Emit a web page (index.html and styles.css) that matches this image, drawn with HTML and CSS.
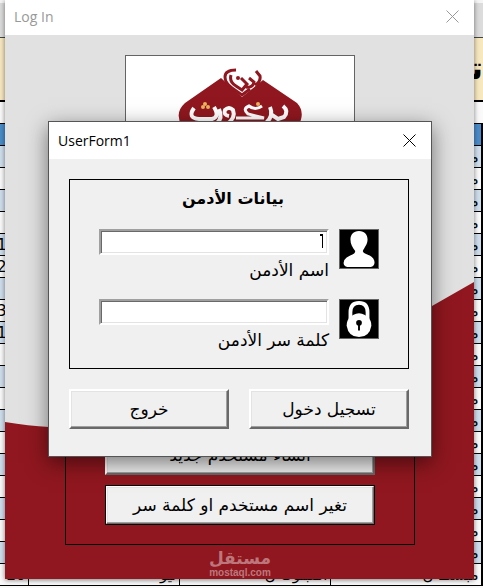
FILE: index.html
```
<!DOCTYPE html>
<html lang="ar">
<head>
  <meta charset="UTF-8" />
  <title>Log In</title>
  <link rel="stylesheet" href="styles.css">
</head>
<body>

  <!-- Spreadsheet behind the windows -->
  <div class="sheet">
    <div class="sheet-ribbon"></div>
    <div class="sheet-title">تقر</div>
    <div class="sheet-gap"></div>
    <table class="sheet-table">
      <colgroup>
        <col class="col-first"><col class="col"><col class="col"><col class="col"><col>
      </colgroup>
      <tbody id="sheetRows"></tbody>
    </table>
  </div>

  <!-- Log In window -->
  <div class="window login">
    <div class="titlebar">
      <span>Log In</span>
      <button class="close" type="button" aria-label="Close">
        <svg width="13" height="13" viewBox="0 0 13 13"><path d="M.5 .5l12 12M12.5 .5l-12 12" /></svg>
      </button>
    </div>
    <div class="login-body">
      <svg class="login-bg" viewBox="0 0 469 544" preserveAspectRatio="none">
        <path d="M0 387Q24 391 44 392Q250 400 427 271L469 247V544H0Z" fill="#90171f" />
      </svg>
      <div class="logo">
        <svg width="228" height="218" viewBox="126 56 228 218">
          <path d="M221 78L185 103Q174 113 182 126L240 172L298 126Q306 113 297 103L263 80L242 97Z" fill="#90171f" />
          <path d="M236 70Q225 70 225 77Q225 83 232 88L242 95L250 89" fill="none" stroke="#90171f" stroke-width="3" />
          <path d="M231 75Q229 82 236 86L242 90L247 84L241 78M246 87Q253 88 254 82L249 78M256 71L260 76Q261 82 255 85" fill="none" stroke="#90171f" stroke-width="3" />
          <circle cx="238" cy="78" r="2" fill="#90171f" />
          <g fill="none" stroke="#fff" stroke-width="4">
            <path d="M194 108Q187 118 199 119H212Q220 117 214 107M219 109Q223 118 217 123" />
            <path d="M229 116Q223 115 225 110Q229 106 233 110Q236 118 227 124" />
            <path d="M262 106Q255 111 249 106Q242 109 248 114L264 118H236" stroke-width="3" />
            <path d="M270 107Q274 116 266 123M283 106Q289 111 284 117L278 119L272 115" />
          </g>
          <g fill="#edb25c">
            <circle cx="203" cy="107" r="2" /><circle cx="208" cy="107" r="2" /><circle cx="205" cy="104" r="2" /><circle cx="258" cy="104" r="2" />
          </g>
        </svg>
      </div>
      <div class="login-frame">
        <button class="btn" type="button">انشاء مستخدم جديد</button>
        <button class="btn btn-default" type="button">تغير اسم مستخدم او كلمة سر</button>
      </div>
      <div class="watermark">
        <div class="watermark-name">مستقل</div>
        <div class="watermark-url">mostaql.com</div>
      </div>
    </div>
  </div>

  <!-- Admin form -->
  <div class="window dialog">
    <div class="titlebar">
      <span>UserForm1</span>
      <button class="close" type="button" aria-label="Close">
        <svg width="13" height="13" viewBox="0 0 13 13"><path d="M.5 .5l12 12M12.5 .5l-12 12" /></svg>
      </button>
    </div>
    <form class="dialog-body">
      <div class="frame">
        <h2>بيانات الأدمن</h2>
        <div class="field">
          <div class="field-main">
            <input type="text" id="adminName" dir="rtl">
            <svg class="caret" width="3" height="14" viewBox="0 0 3 14"><path d="M0 0h3v14h-1V2H0Z" /></svg>
            <label for="adminName">اسم الأدمن</label>
          </div>
          <svg class="icon" viewBox="0 0 40 40">
            <path d="M20 1C26 1 29 5 29 10C29 15 26 18 24 22C25 26 31 25 35 30Q37 33 36 36Q35 39 30 39H10Q5 39 4 36Q3 32 7 29C11 26 16 26 16 22C13 18 11 15 11 10C11 5 14 1 20 1Z" fill="#fff" />
          </svg>
        </div>
        <div class="field">
          <div class="field-main">
            <input type="password" id="adminPass" dir="rtl">
            <label for="adminPass">كلمة سر الأدمن</label>
          </div>
          <svg class="icon" viewBox="0 0 40 40">
            <path d="M11 20V13Q11 3 20 3Q29 3 29 13V20" fill="none" stroke="#fff" stroke-width="4" />
            <path d="M20 14Q33 16 33 27Q31 39 20 39Q9 39 7 27Q7 16 20 14Z" fill="#fff" />
            <circle cx="20" cy="24" r="3" />
            <path d="M19 24h2v8h-2z" />
          </svg>
        </div>
      </div>
      <div class="actions">
        <button class="btn" type="button">خروج</button>
        <button class="btn" type="button">تسجيل دخول</button>
      </div>
    </form>
  </div>

  <script>
    const rows = document.getElementById("sheetRows");
    const numbers = { 5: "1", 6: "2", 8: "3", 9: "1" };

    for (let i = 0; i < 21; i++) {
      const row = document.createElement("tr");
      if (i === 0) {
        row.className = "head";
        row.innerHTML = "<td></td><td></td><td></td><td></td><td></td>";
      } else if (i === 20) {
        row.innerHTML = `<td>20</td><td>تيو</td><td>المبلوك ن</td><td>مبسط ن</td><td></td>`;
      } else {
        row.innerHTML = `<td class="num">${numbers[i] || ""}</td><td></td><td></td><td>م</td><td></td>`;
      }
      rows.appendChild(row);
    }
  </script>
</body>
</html>
```
FILE: styles.css
```
* {
  box-sizing: border-box;
}

body {
  margin: 0;
  min-height: 100vh;
  position: relative;
  overflow: hidden;
  background: #fafafa;
  font-family: "DejaVu Sans", Tahoma, sans-serif;
  font-size: 17px;
  color: #000;
}

/* spreadsheet */
.sheet-ribbon {
  height: 38px;
  background: #dcdcdc;
  border-top: 3px solid #f5f5f5;
  border-bottom: 1px solid #444;
}

.sheet-title {
  height: 64px;
  background: #f8e8c0;
  border-bottom: 2px solid #000;
  font-size: 32px;
  font-weight: bold;
  line-height: 60px;
  text-align: right;
  overflow: hidden;
}

.sheet-gap {
  height: 21px;
}

.sheet-table {
  width: 100%;
  table-layout: fixed;
  border-collapse: collapse;
  font-size: 15px;
  line-height: 20px;
}

.col-first {
  width: 28px;
}

.col {
  width: 151px;
}

.sheet-table td {
  height: 22px;
  padding: 0 2px;
  border: 1px solid #000;
  text-align: right;
  white-space: nowrap;
  overflow: hidden;
}

.sheet-table td:first-child {
  border-left: 0;
}

.sheet-table td.num {
  text-align: left;
  padding: 0;
  text-indent: -3px;
}

.sheet-table tr:nth-child(even) {
  background: #cfdeec;
}

.sheet-table .head {
  background: #4a8bc9;
}

/* windows */
.window {
  position: absolute;
}

.titlebar {
  display: flex;
  align-items: center;
  justify-content: space-between;
  background: #fff;
  font-family: "Open Sans", "Segoe UI", sans-serif;
  font-size: 14px;
}

.close {
  display: flex;
  padding: 0;
  border: 0;
  background: none;
}

.close path {
  fill: none;
  stroke: #000;
}

.login {
  top: 0;
  left: 5px;
  right: 9px;
  box-shadow: 0 1px 5px rgba(0, 0, 0, 0.5);
}

.login .titlebar {
  height: 35px;
  padding: 0 15px 2px 9px;
  color: #999;
}

.login .close path {
  stroke: #999;
}

.login-body {
  position: relative;
  padding: 20px 59px 0 60px;
  background: #e1e1e1;
}

.login-bg {
  position: absolute;
  top: 0;
  left: 0;
  width: 100%;
  height: 100%;
}

.logo {
  position: relative;
  width: 230px;
  height: 220px;
  margin: 0 auto 100px;
  background: #fff;
  border: 1px solid #646464;
}

.login-frame {
  position: relative;
  display: flex;
  flex-direction: column;
  gap: 10px;
  padding: 59px 39px 19px;
  border: 1px solid #000;
}

.watermark {
  position: relative;
  height: 34px;
  padding-top: 4px;
  text-align: center;
  color: #bd777c;
  font-weight: bold;
}

.watermark-name {
  font-size: 17px;
  line-height: 18px;
}

.watermark-url {
  font-family: "Liberation Sans", Arial, sans-serif;
  font-size: 10px;
  line-height: 12px;
}

.btn {
  flex: 1 1 auto;
  height: 40px;
  min-height: 40px;
  padding: 0;
  background: #f0f0f0;
  border: 2px solid;
  border-color: #fff #696969 #696969 #fff;
  box-shadow: inset -1px -1px #a0a0a0, inset 1px 1px #e3e3e3;
  font-family: inherit;
  font-size: 17px;
  color: #000;
}

.btn-default {
  outline: 1px solid #000;
  outline-offset: -1px;
}

.dialog {
  top: 121px;
  left: 48px;
  right: 51px;
  background: #f0f0f0;
  border: 1px solid #555;
  box-shadow: 0 6px 20px rgba(0, 0, 0, 0.5);
}

.dialog .titlebar {
  height: 37px;
  padding: 0 15px 0 9px;
}

.dialog-body {
  padding: 20px 22px 27px 20px;
}

.frame {
  height: 190px;
  padding: 9px 29px 0;
  border: 1px solid #000;
}

.frame h2 {
  margin: 0 12px 20px 0;
  font-size: 16px;
  line-height: 20px;
  text-align: center;
}

.field {
  display: flex;
  gap: 10px;
  height: 70px;
}

.field-main {
  position: relative;
  flex: 1;
  text-align: right;
}

.field input {
  display: block;
  width: 100%;
  height: 26px;
  padding: 0 4px;
  background: #fff;
  border: 2px solid;
  border-color: #a0a0a0 #fff #fff #a0a0a0;
  box-shadow: inset 1px 1px #696969, inset -1px -1px #e3e3e3;
  font-family: inherit;
  font-size: 17px;
}

.field label {
  display: block;
  line-height: 30px;
}

.caret {
  position: absolute;
  top: 5px;
  right: 6px;
}

.icon {
  width: 40px;
  height: 40px;
  background: #000;
  border: 1px solid #646464;
}

.actions {
  display: flex;
  gap: 20px;
  margin-top: 20px;
}

.actions .btn {
  flex: 1 1 0;
}
```
